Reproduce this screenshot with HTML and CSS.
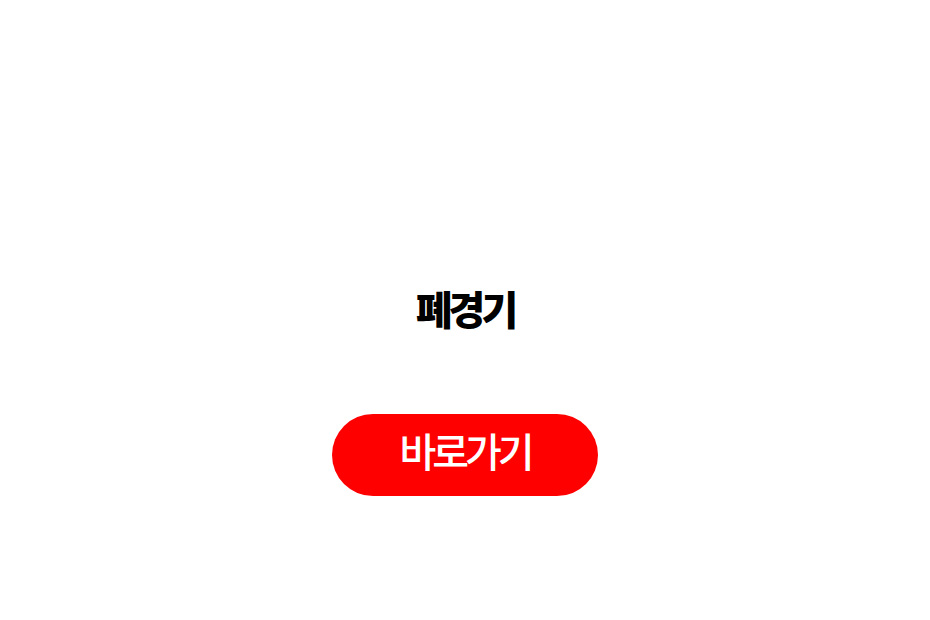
FILE: index.html
```html
<!DOCTYPE html>
<html lang="ko">
<head>
  <meta charset="UTF-8">
  <title>폐경기</title>
  <meta name="viewport" content="width=device-width, initial-scale=1.0">
  <link rel="stylesheet" href="styles.css">
</head>
<body>
<div class="page">
  <h1 class="title">폐경기</h1>
  <a class="go-btn" href="#">바로가기</a>
</div>
</body>
</html>
```

FILE: styles.css
```css
body {
  margin: 0;
  padding: 0;
  background: #fff;
  font-family: "Noto Sans CJK KR", "Noto Sans", sans-serif;
}
.page {
  display: flex;
  flex-direction: column;
  align-items: center;
  padding-top: 281px;
}
.title {
  margin: 0;
  font-size: 40px;
  font-weight: 900;
  line-height: 54px;
  letter-spacing: -4px;
  color: #000;
}
.go-btn {
  display: flex;
  align-items: center;
  justify-content: center;
  box-sizing: border-box;
  margin-top: 79px;
  padding-bottom: 10px;
  width: 266px;
  height: 82px;
  border-radius: 41px;
  background: #ff0000;
  color: #fff;
  font-size: 40px;
  font-weight: 500;
  letter-spacing: -4px;
  text-decoration: none;
}
```
